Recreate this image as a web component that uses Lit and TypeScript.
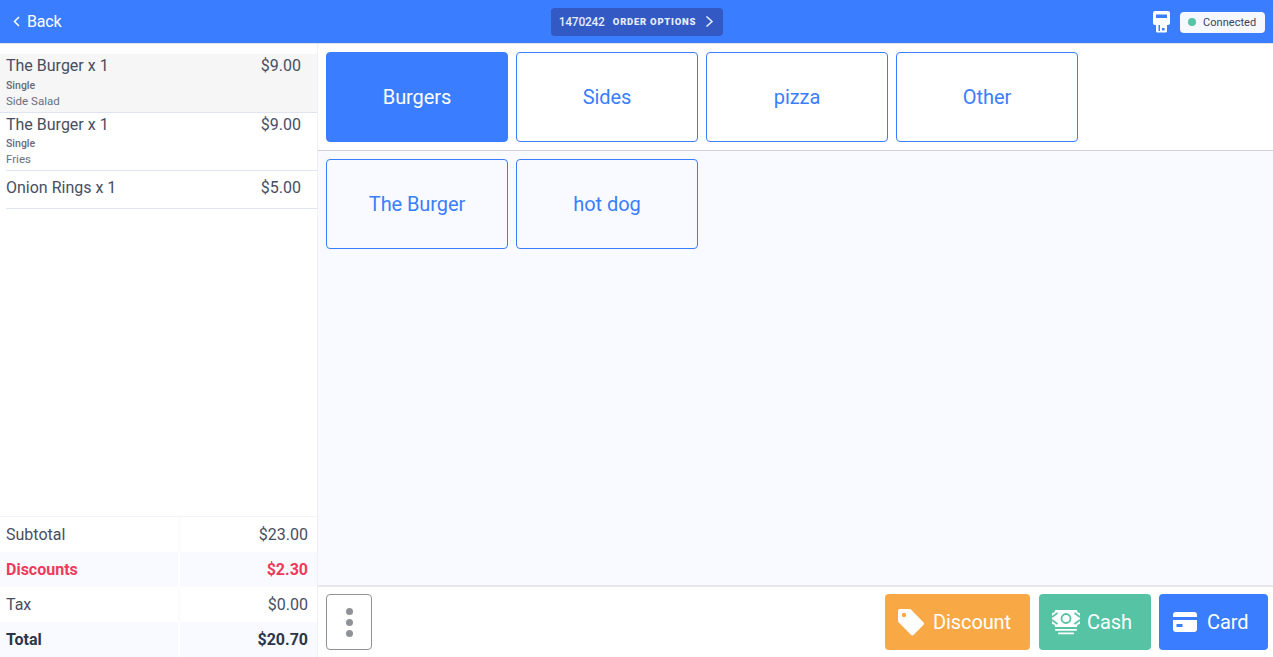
import { LitElement, html, css } from 'lit';
import { customElement } from 'lit/decorators.js';

const items = [
  { name: 'The Burger x 1', price: '$9.00', size: 'Single', extra: 'Side Salad', active: true },
  { name: 'The Burger x 1', price: '$9.00', size: 'Single', extra: 'Fries', active: false },
  { name: 'Onion Rings x 1', price: '$5.00', size: '', extra: '', active: false }
];

const totals = [
  { label: 'Subtotal', value: '$23.00', cls: '' },
  { label: 'Discounts', value: '$2.30', cls: 'alt red' },
  { label: 'Tax', value: '$0.00', cls: '' },
  { label: 'Total', value: '$20.70', cls: 'alt bold' }
];

const categories = ['Burgers', 'Sides', 'pizza', 'Other'];
const products = ['The Burger', 'hot dog'];

@customElement('app-root')
export class AppRoot extends LitElement {
  static styles = css`
    :host {
      display: flex;
      flex-direction: column;
      width: 1273px;
      height: 657px;
      overflow: hidden;
      font-family: Roboto, "Liberation Sans", sans-serif;
      color: #3c4257;
      background: #fff;
    }
    .top {
      flex: none;
      height: 44px;
      box-sizing: border-box;
      border-bottom: 1px solid #dfe2e9;
      background: #3a7eff;
      background-clip: padding-box;
      display: grid;
      grid-template-columns: 1fr auto 1fr;
      align-items: center;
      color: #fff;
    }
    .back {
      display: flex;
      align-items: center;
      gap: 7px;
      padding-left: 13px;
      font-size: 16px;
      letter-spacing: -0.2px;
    }
    .order {
      display: flex;
      align-items: center;
      height: 28px;
      box-sizing: border-box;
      margin-left: 1px;
      padding: 0 9px 0 8px;
      border-radius: 4px;
      background: #3259c4;
    }
    .order-num { width: 46px; font-size: 12px; font-weight: 500; letter-spacing: -0.3px; color: #e6ecfb; }
    .order-label { font-size: 9.5px; font-weight: 900; letter-spacing: 0.75px; margin-left: 8px; color: #e6ecfb; }
    .order svg { margin-left: 9px; }
    .status {
      display: flex;
      justify-content: flex-end;
      align-items: center;
      gap: 10px;
      padding-right: 8px;
    }
    .pill {
      display: flex;
      align-items: center;
      gap: 7px;
      width: 85px;
      height: 21px;
      margin-top: 1px;
      box-sizing: border-box;
      padding-left: 8px;
      border-radius: 4px;
      background: #f6f8ff;
      color: #3c4257;
      font-size: 11px;
      letter-spacing: 0.05px;
    }
    .dot { width: 8px; height: 8px; border-radius: 50%; background: #56c3a5; }
    .main { flex: 1; display: flex; min-height: 0; }
    .left {
      flex: none;
      width: 318px;
      box-sizing: border-box;
      border-right: 1px solid #eef0f6;
      display: flex;
      flex-direction: column;
    }
    .lines { flex: 1; padding-top: 10px; }
    .line { position: relative; height: 58px; box-sizing: border-box; padding: 2px 16px 0 6px; }
    .line::after {
      content: '';
      position: absolute;
      left: 6px;
      right: 0;
      bottom: 0;
      height: 1px;
      background: #dfe4f0;
    }
    .line.active { background: #f6f6f6; height: 59px; }
    .line.active::after { left: 0; }
    .line.active .size { margin-top: 5px; }
    .line.plain { height: 38px; padding-top: 7px; }
    .row {
      display: flex;
      justify-content: space-between;
      font-size: 16px;
      font-weight: 450;
      line-height: 19px;
      color: #484e61;
    }
    .size { font-size: 10.5px; font-weight: 500; line-height: 12px; margin-top: 4px; color: #666b78; }
    .extra { font-size: 11.5px; line-height: 14px; margin-top: 2px; color: #6a6f7c; }
    .sum { flex: none; border-top: 1px solid #f3f4fa; }
    .sum-row {
      display: grid;
      grid-template-columns: 178px 1fr;
      column-gap: 2px;
      height: 35px;
      align-items: center;
      font-size: 16px;
      color: #484e61;
      background: #fafaff;
    }
    .sum-row > div { height: 100%; display: flex; align-items: center; background: #fff; }
    .sum-row > div:first-child { padding-left: 6px; }
    .sum-row > div:last-child { justify-content: flex-end; padding-right: 9px; }
    .sum-row.alt { background: #fff; }
    .sum-row.alt > div { background: #f9faff; }
    .sum-row.red { color: #ee3b5b; font-weight: 700; }
    .sum-row.bold { color: #2d3548; font-weight: 700; }
    .right { flex: 1; display: flex; flex-direction: column; min-width: 0; }
    .cats {
      flex: none;
      display: flex;
      gap: 8px;
      padding: 8px 8px 8px;
      border-bottom: 1px solid #cfd1d6;
    }
    .tile {
      width: 182px;
      height: 90px;
      box-sizing: border-box;
      border: 1px solid #3a7eff;
      border-radius: 4px;
      background: transparent;
      color: #3a7eff;
      font: 400 20px Roboto, sans-serif;
      letter-spacing: -0.08px;
      padding: 0;
    }
    .tile.on { background: #3a7eff; color: #fff; font-weight: 450; letter-spacing: -0.1px; }
    .prods {
      flex: 1;
      display: flex;
      align-items: flex-start;
      gap: 8px;
      padding: 8px;
      background: #f9faff;
    }
    .foot {
      flex: none;
      height: 72px;
      box-sizing: border-box;
      border-top: 2px solid #e6e7ec;
      display: flex;
      align-items: center;
      padding: 0 5px 0 8px;
      gap: 8px;
    }
    .more {
      width: 46px;
      height: 56px;
      box-sizing: border-box;
      margin-right: auto;
      border: 1px solid #8f9196;
      border-radius: 4px;
      background: #fff;
      display: flex;
      flex-direction: column;
      align-items: center;
      justify-content: center;
      gap: 4px;
      padding: 0;
    }
    .more span { width: 7px; height: 7px; border-radius: 50%; background: #909298; }
    .pay {
      height: 56px;
      box-sizing: border-box;
      border: 0;
      border-radius: 4px;
      color: #fff;
      font: 450 20px Roboto, sans-serif;
      letter-spacing: -0.1px;
      display: flex;
      align-items: center;
      padding: 0;
    }
    .pay.discount { width: 145px; margin-right: 1px; background: #f8a945; padding-left: 12px; gap: 8px; }
    .pay.cash { width: 112px; background: #56c3a5; padding-left: 13px; gap: 7px; }
    .pay.card { width: 109px; background: #3a7eff; padding-left: 14px; gap: 10px; }
  `;

  render() {
    return html`
      <div class="top">
        <div class="back">
          <svg width="7" height="11" viewBox="0 0 7 11" fill="none" stroke="#fff" stroke-width="1.5"><path d="M6 1 1.5 5.5 6 10"/></svg>
          Back
        </div>
        <div class="order">
          <span class="order-num">1470242</span>
          <span class="order-label">ORDER OPTIONS</span>
          <svg width="9" height="13" viewBox="0 0 9 13" fill="none" stroke="#e6ecfb" stroke-width="1.6"><path d="M1.500 1.500 7 6.500 1.500 11.500"/></svg>
        </div>
        <div class="status">
          <svg width="17" height="22" viewBox="0 0 17 22">
            <path fill="#fff" fill-rule="evenodd" d="M2 0h13a2 2 0 0 1 2 2v10a2 2 0 0 1-2 2h-1v6a1.500 1.500 0 0 1-1.500 1.500h-8.500A1.500 1.500 0 0 1 3 20v-6H2a2 2 0 0 1-2-2V2a2 2 0 0 1 2-2Zm1 3.500v3.500h11V3.500H3ZM5.500 14v6h1.500v-6H5.500Zm3.500 3v2.500h2.500V17H9Z"/>
          </svg>
          <div class="pill"><span class="dot"></span>Connected</div>
        </div>
      </div>
      <div class="main">
        <div class="left">
          <div class="lines">
            ${items.map(
              (i) => html`
                <div class="line ${i.active ? 'active' : ''} ${i.size ? '' : 'plain'}">
                  <div class="row"><span>${i.name}</span><span>${i.price}</span></div>
                  ${i.size ? html`<div class="size">${i.size}</div><div class="extra">${i.extra}</div>` : ''}
                </div>
              `
            )}
          </div>
          <div class="sum">
            ${totals.map(
              (t) => html`<div class="sum-row ${t.cls}"><div>${t.label}</div><div>${t.value}</div></div>`
            )}
          </div>
        </div>
        <div class="right">
          <div class="cats">
            ${categories.map((c, n) => html`<button class="tile ${n === 0 ? 'on' : ''}">${c}</button>`)}
          </div>
          <div class="prods">
            ${products.map((p) => html`<button class="tile">${p}</button>`)}
          </div>
          <div class="foot">
            <button class="more"><span></span><span></span><span></span></button>
            <button class="pay discount">
              <svg width="28" height="28" viewBox="0 0 28 28"><path fill="#fff" fill-rule="evenodd" d="M1 3a2 2 0 0 1 2-2h9.500a2 2 0 0 1 1.500.6l12.400 12.600a2 2 0 0 1 0 2.800l-9.700 9.800a2 2 0 0 1-2.800 0L1.600 14.200A2 2 0 0 1 1 12.800V3Zm6 1.800a2.200 2.200 0 1 0 0 4.400 2.200 2.200 0 0 0 0-4.400Z"/></svg>
              Discount
            </button>
            <button class="pay cash">
              <svg width="28" height="25" viewBox="0 0 28 25">
                <path fill="#fff" d="M3 0h22a3 3 0 0 0 3 3v11a3 3 0 0 0-3 3H3a3 3 0 0 0-3-3V3a3 3 0 0 0 3-3Z"/>
                <g fill="none" stroke="#56c3a5" stroke-width="1.800">
                  <circle cx="14" cy="8.500" r="4.500"/>
                  <path d="M0 7 5.500 3M0 10l5.500 4M28 7l-5.500-4M28 10l-5.500 4"/>
                </g>
                <rect x="3" y="19" width="22" height="1.800" rx=".9" fill="#fff"/>
                <rect x="6" y="22.500" width="16" height="1.800" rx=".9" fill="#fff"/>
              </svg>
              Cash
            </button>
            <button class="pay card">
              <svg width="24" height="20" viewBox="0 0 24 20"><path fill="#fff" fill-rule="evenodd" d="M3 0h18a3 3 0 0 1 3 3v2H0V3a3 3 0 0 1 3-3ZM0 8h24v9a3 3 0 0 1-3 3H3a3 3 0 0 1-3-3V8Zm3.500 4v3h6v-3h-6Z"/></svg>
              Card
            </button>
          </div>
        </div>
      </div>
    `;
  }
}
